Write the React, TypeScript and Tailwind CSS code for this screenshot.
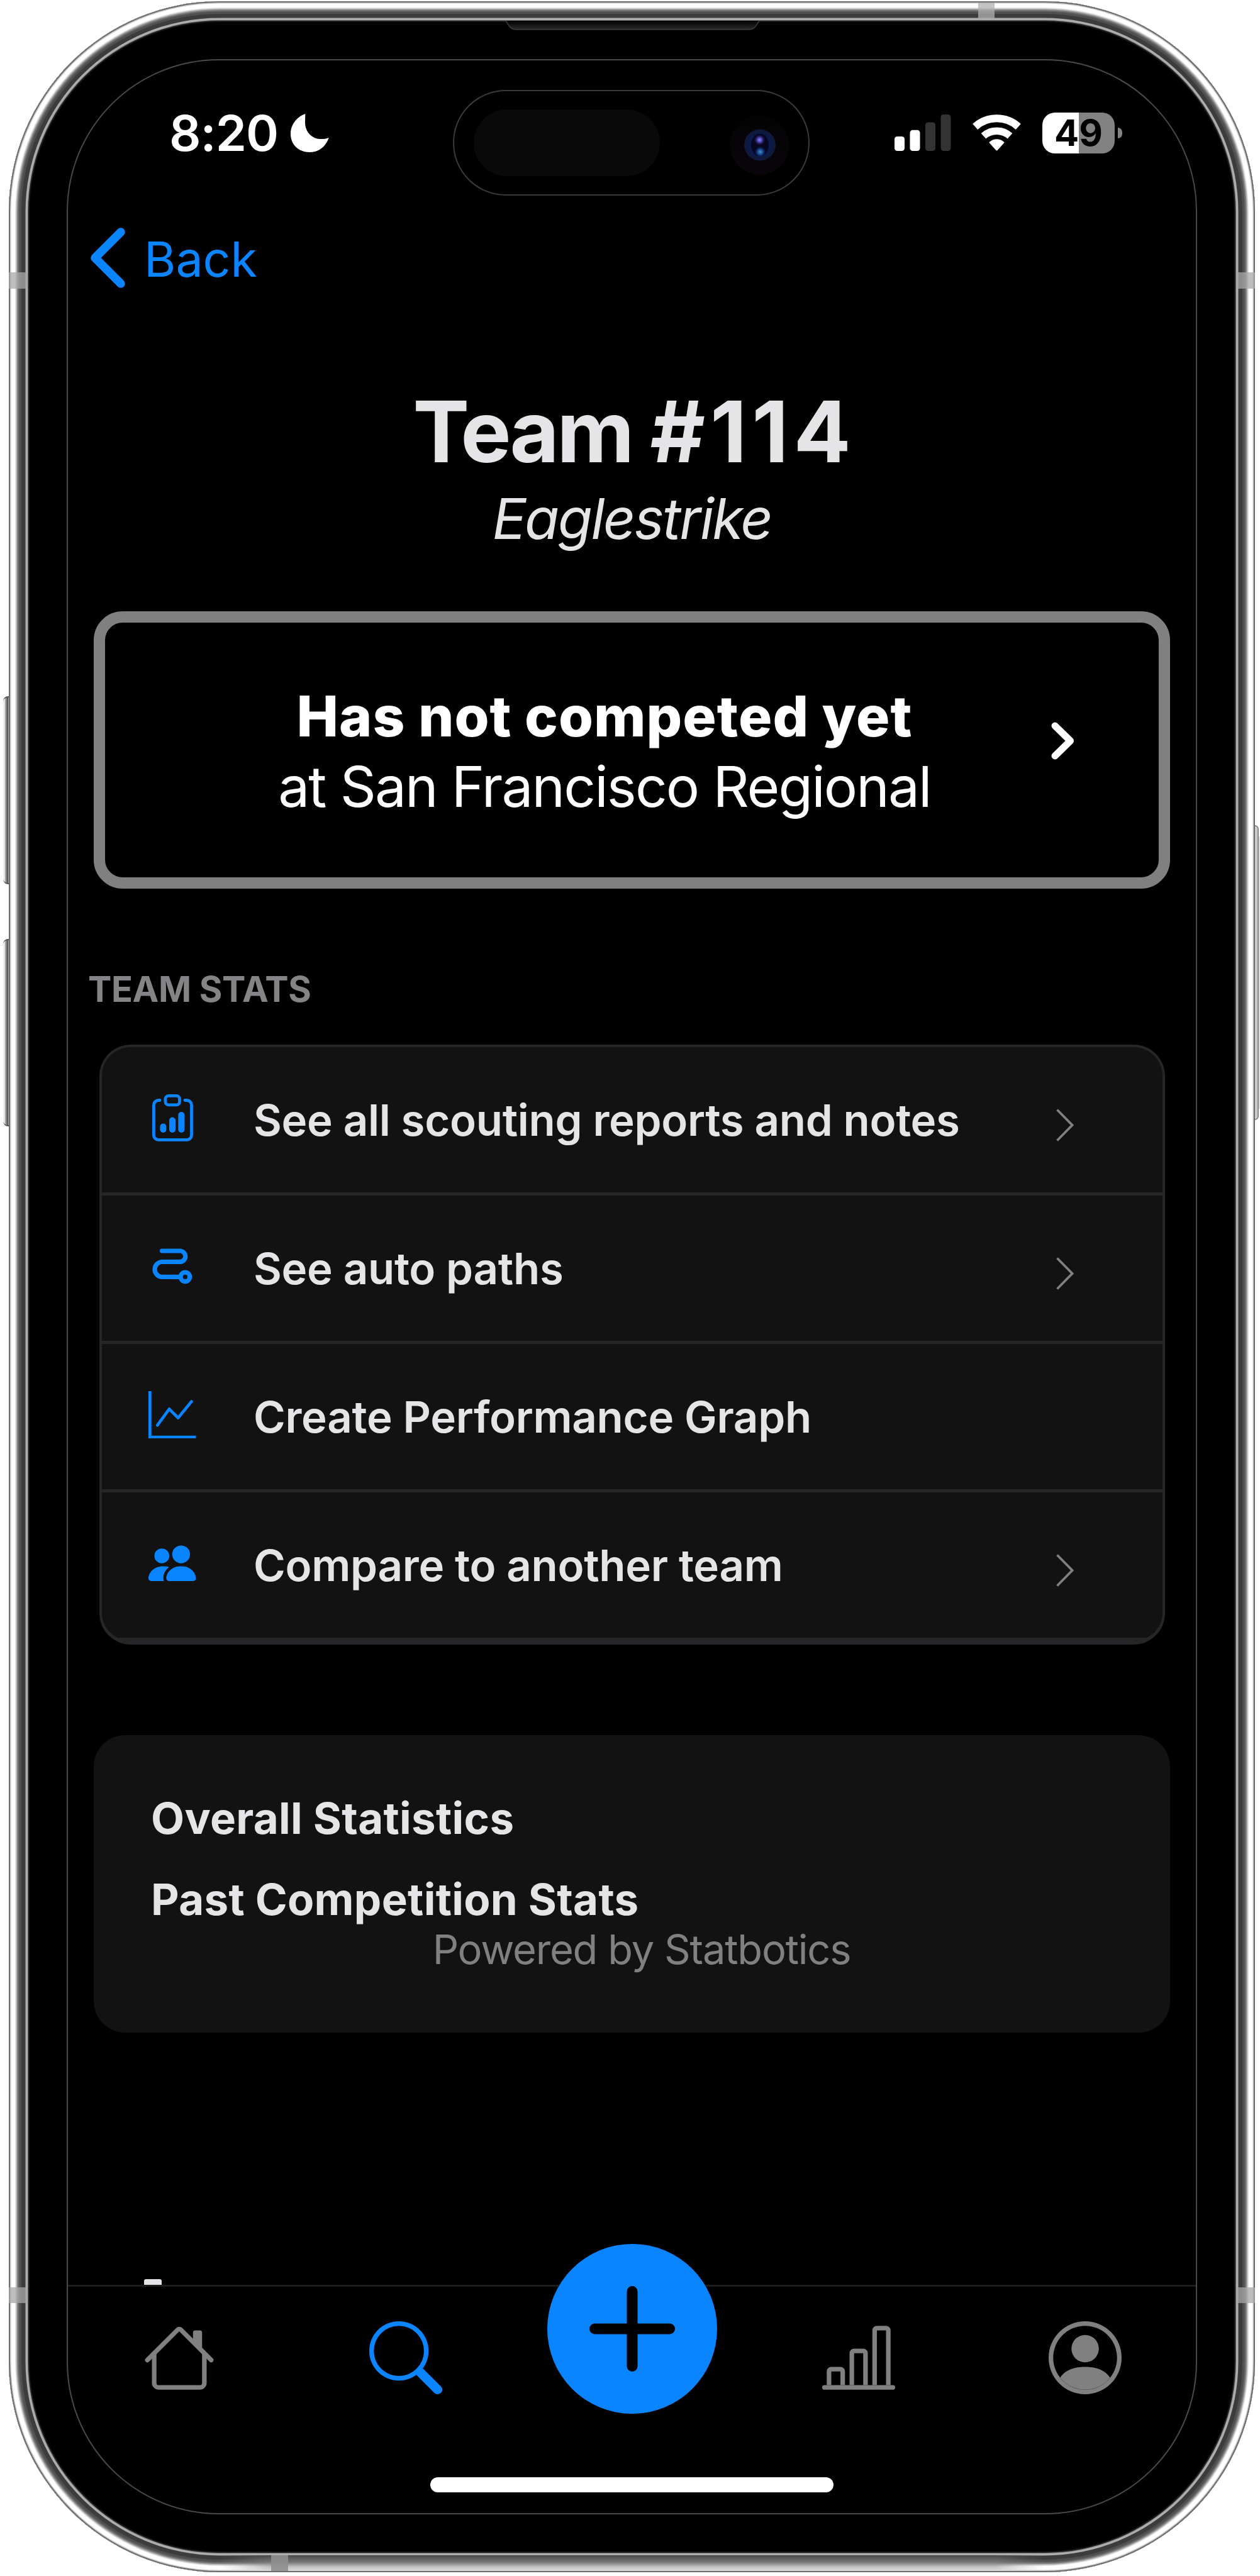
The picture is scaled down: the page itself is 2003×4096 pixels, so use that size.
import React from "react";
import { BsGraphUp, BsPeopleFill } from "react-icons/bs";

function Moon() {
  return (
    <svg width="61" height="61" viewBox="0 0 61 61" fill="#fff">
      <path d="M23.3 0C9 5 0 18 0 32c0 17 13 29 30 29 15 0 26-9 30.7-23C56 40 50 40.3 46 40 33 39 23 28 23 14 23 9 23.3 4 23.3 0Z" />
    </svg>
  );
}

function Signal() {
  return (
    <svg width="90" height="58" viewBox="0 0 90 58">
      <rect x="0" y="35" width="16" height="23" rx="4.5" fill="#fff" />
      <rect x="24.5" y="24.7" width="16" height="33.3" rx="4.5" fill="#fff" />
      <rect x="49" y="12.5" width="16" height="45.5" rx="4.5" fill="#333" />
      <rect x="73.5" y="0" width="16" height="58" rx="4.5" fill="#333" />
    </svg>
  );
}

function Wifi() {
  return (
    <svg width="77" height="58" viewBox="0 0 77 58" fill="none" stroke="#fff">
      <path d="M4.2 19.5A51.3 51.3 0 0 1 72.8 19.5" strokeWidth="12" />
      <path d="M17.5 34.2A31.5 31.5 0 0 1 59.5 34.2" strokeWidth="11.5" />
      <path d="M38.5 56L28.2 44.6A15.6 15.6 0 0 1 48.8 44.6Z" fill="#fff" strokeWidth="3" strokeLinejoin="round" />
    </svg>
  );
}

function Battery() {
  return (
    <div className="flex items-center">
      <div className="flex h-[65px] w-[115px] items-center justify-center rounded-[20px] bg-[linear-gradient(to_right,#fff_50%,#828282_50%)] text-[58px] leading-none font-bold text-black">
        49
      </div>
      <div className="ml-[5px] h-[17px] w-[7px] rounded-r-full bg-[#828282]" />
    </div>
  );
}

function StatusBar() {
  return (
    <div className="flex h-[230px] shrink-0 items-center pr-[117px] pl-[161px]">
      <span className="w-[193px] text-[79px] leading-none font-semibold tracking-[-1px] text-white">8:20</span>
      <Moon />
      <div className="ml-auto flex items-center gap-[34px]">
        <Signal />
        <Wifi />
        <Battery />
      </div>
    </div>
  );
}

function Island() {
  return (
    <div className="absolute top-[141px] left-[706px] flex h-[168px] w-[567px] items-center justify-between rounded-full border-2 border-[#3a3a3a] bg-black pr-[30px] pl-[31px]">
      <div className="h-[106px] w-[296px] rounded-full bg-[#090909]" />
      <svg width="95" height="95" viewBox="0 0 95 95" className="mt-[6px]">
        <defs>
          <linearGradient id="housing" x1="0" y1="0" x2="0" y2="1">
            <stop offset="0" stopColor="#030303" />
            <stop offset="1" stopColor="#0a050c" />
          </linearGradient>
          <radialGradient id="glintA">
            <stop offset="0" stopColor="#8a86ff" />
            <stop offset="0.45" stopColor="#4340a8" />
            <stop offset="1" stopColor="#150d35" stopOpacity="0" />
          </radialGradient>
          <radialGradient id="glintB">
            <stop offset="0" stopColor="#4a8cc0" />
            <stop offset="0.5" stopColor="#123f8a" />
            <stop offset="1" stopColor="#0a0d35" stopOpacity="0" />
          </radialGradient>
        </defs>
        <circle cx="47.5" cy="47.5" r="47" fill="url(#housing)" />
        <circle cx="48" cy="47.5" r="25" fill="#10193c" />
        <circle cx="48" cy="47.5" r="19" fill="#0a1a50" />
        <ellipse cx="48" cy="47.5" rx="14" ry="18" fill="#08061f" />
        <circle cx="47.5" cy="39.5" r="9" fill="url(#glintA)" />
        <circle cx="48.5" cy="58.5" r="9.5" fill="url(#glintB)" />
      </svg>
    </div>
  );
}

function Speaker() {
  return (
    <svg width="405" height="15" viewBox="0 0 405 15" className="absolute top-[31px] left-[789px]">
      <defs>
        <linearGradient id="mesh" x1="0" y1="0" x2="0" y2="1">
          <stop offset="0" stopColor="#000" />
          <stop offset="1" stopColor="#2c2c2c" />
        </linearGradient>
      </defs>
      <path d="M1 0C4 4 7 14 17 14H388C398 14 401 4 404 0" fill="url(#mesh)" stroke="#3c3c3c" strokeWidth="1.5" />
    </svg>
  );
}

function Chevron({ bold = false }: { bold?: boolean }) {
  return bold ? (
    <svg width="37" height="60" viewBox="0 0 37 60" fill="none" stroke="#fff" strokeWidth="11" strokeLinecap="round" strokeLinejoin="round">
      <path d="M6 6L30.5 30L6 54" />
    </svg>
  ) : (
    <svg width="28" height="52" viewBox="0 0 28 52" fill="none" stroke="#808080" strokeWidth="3.8">
      <path d="M1.5 1.5L25.5 26L1.5 50.5" />
    </svg>
  );
}

function ClipboardIcon() {
  return (
    <svg width="65" height="75" viewBox="0 0 65 75" fill="none" stroke="#0a84ff" strokeWidth="4.8" strokeLinecap="round">
      <rect x="20.9" y="2.4" width="22.6" height="14.4" rx="5" />
      <path d="M12 9.5H10A7.6 7.6 0 0 0 2.4 17V65A7.4 7.4 0 0 0 10 72.3H55A7.4 7.4 0 0 0 62.5 65V17A7.6 7.6 0 0 0 55 9.5H52" />
      <g stroke="none" fill="#0a84ff">
        <rect x="12.4" y="46.5" width="10" height="14.5" rx="5" />
        <rect x="27" y="36.5" width="10" height="24.5" rx="5" />
        <rect x="41.3" y="28" width="10" height="33" rx="5" />
      </g>
    </svg>
  );
}

function PathIcon() {
  return (
    <svg width="64" height="57" viewBox="0 0 64 57" fill="none" stroke="#0a84ff" strokeWidth="7.2" strokeLinecap="round">
      <path d="M15.5 4H44A8.6 8.6 0 0 1 44 21.4H16A12 12 0 0 0 16 45.4H43" />
      <circle cx="52.4" cy="45.4" r="7.3" />
    </svg>
  );
}

const rows = [
  { label: "See all scouting reports and notes", icon: <ClipboardIcon />, arrow: true },
  { label: "See auto paths", icon: <PathIcon />, arrow: true },
  { label: "Create Performance Graph", icon: <BsGraphUp size={75.5} color="#0a84ff" />, arrow: false },
  { label: "Compare to another team", icon: <BsPeopleFill size={75.5} color="#0a84ff" />, arrow: true },
];

function TabIcon({ color, children }: { color: string; children: React.ReactNode }) {
  return (
    <svg width="116" height="116" viewBox="0 0 16 16" fill={color} fillRule="evenodd" className="justify-self-center">
      {children}
    </svg>
  );
}

function TabBar() {
  return (
    <nav className="flex h-[363px] shrink-0 flex-col items-center border-t-[3px] border-[#1c1c1c] pt-[55px]">
      <div className="grid h-[116px] w-[1800px] shrink-0 grid-cols-5 items-start">
        <TabIcon color="#808080">
          <path d="M2 13.5V7h1v6.5a.5.5 0 0 0 .5.5h9a.5.5 0 0 0 .5-.5V7h1v6.5a1.5 1.5 0 0 1-1.5 1.5h-9A1.5 1.5 0 0 1 2 13.5zm11-11V6l-2-2V2.5a.5.5 0 0 1 .5-.5h1a.5.5 0 0 1 .5.5z" />
          <path d="M7.293 1.5a1 1 0 0 1 1.414 0l6.647 6.646a.5.5 0 0 1-.708.708L8 2.207 1.354 8.854a.5.5 0 1 1-.708-.708L7.293 1.5z" />
        </TabIcon>
        <TabIcon color="#0a84ff">
          <path d="M10.442 10.442a1 1 0 0 1 1.415 0l3.85 3.85a1 1 0 0 1-1.414 1.415l-3.85-3.85a1 1 0 0 1 0-1.415z" />
          <path d="M6.5 12a5.5 5.5 0 1 0 0-11 5.5 5.5 0 0 0 0 11zM13 6.5a6.5 6.5 0 1 1-13 0 6.5 6.5 0 0 1 13 0z" />
        </TabIcon>
        <div className="-mt-[123px] flex h-[270px] w-[270px] items-center justify-center justify-self-center rounded-full bg-[#0a84ff]">
          <svg width="136" height="136" viewBox="0 0 136 136" stroke="#000" strokeWidth="17" strokeLinecap="round">
            <path d="M68 8.5V127.5M8.5 68H127.5" />
          </svg>
        </div>
        <TabIcon color="#808080">
          <path d="M4 11H2v3h2v-3zm5-4H7v7h2V7zm5-5v12h-2V2h2zm-2-1a1 1 0 0 0-1 1v12h4V2a1 1 0 0 0-1-1h-2zM6 7a1 1 0 0 1 1-1h2a1 1 0 0 1 1 1v7H6V7zm-5 4a1 1 0 0 1 1-1h2a1 1 0 0 1 1 1v3H1v-3z" />
          <rect x="0" y="14" width="16" height="1" rx="0.5" />
        </TabIcon>
        <TabIcon color="#808080">
          <path d="M13.468 12.37C12.758 11.226 11.195 10 8 10s-4.757 1.225-5.468 2.37A6.987 6.987 0 0 0 8 15a6.987 6.987 0 0 0 5.468-2.63z" />
          <path d="M8 9a3 3 0 1 0 0-6 3 3 0 0 0 0 6z" />
          <path d="M8 1a7 7 0 1 0 0 14A7 7 0 0 0 8 1zM0 8a8 8 0 1 1 16 0A8 8 0 0 1 0 8z" />
        </TabIcon>
      </div>
      <div className="mt-[132px] h-[24px] w-[641px] rounded-full bg-white" />
    </nav>
  );
}

function Screen() {
  return (
    <div className="flex h-[3904px] w-[1797px] flex-col overflow-hidden rounded-[242px] border-2 border-[#4a4a4a] bg-black">
      <StatusBar />
      <div className="flex h-[172px] shrink-0 items-center pl-[35px] text-[#0a84ff]">
        <svg width="56" height="96" viewBox="0 0 56 96" fill="none" stroke="#0a84ff" strokeWidth="13.5" strokeLinecap="round" strokeLinejoin="round" className="-mt-[4px]">
          <path d="M49 7L8 48L49 89" />
        </svg>
        <span className="ml-[30px] text-[77px] leading-none">Back</span>
      </div>
      <h1 className="mt-[113px] text-center text-[135px] leading-[150px] font-bold text-[#e5e5e7]">
        <span className="tracking-[-3.5px]">Team </span>
        <span className="tracking-[8px]">#11</span>4
      </h1>
      <p className="text-center text-[90px] leading-[128px] tracking-[-2.5px] text-[#e5e5e7] italic">Eaglestrike</p>

      <div className="mt-[83px] ml-[41px] flex h-[441px] w-[1711px] shrink-0 items-start rounded-[46px] border-[18.5px] border-[#808080] pt-[93px] text-white">
        <div className="ml-[104px] w-[1380px] text-center text-[89px] leading-[112px] whitespace-nowrap">
          <div className="font-extrabold tracking-[1px]">Has not competed yet</div>
          <div className="tracking-[-1.9px]">at San Francisco Regional</div>
        </div>
        <div className="mt-[65px] ml-[20px]">
          <Chevron bold />
        </div>
      </div>

      <h2 className="mt-[120px] ml-[32px] text-[56px] leading-[80px] font-bold tracking-[-0.4px] text-[#848487]">TEAM STATS</h2>
      <ul className="mt-[48px] ml-[50px] w-[1694px] shrink-0 overflow-hidden rounded-[50px] border-4 border-b-[6px] border-[#262628] bg-[#121212]">
        {rows.map((row) => (
          <li key={row.label} className="flex h-[236px] items-center border-b-[5px] border-[#262628] pr-[141px] pl-[74px]">
            <span className="-mt-[6px] flex w-[76px] justify-center">{row.icon}</span>
            <span className="ml-[91px] text-[69px] leading-[80px] font-semibold tracking-[-0.3px] whitespace-nowrap text-[#e5e5e7]">{row.label}</span>
            {row.arrow && (
              <span className="mt-[17px] ml-auto">
                <Chevron />
              </span>
            )}
          </li>
        ))}
      </ul>

      <div className="mt-[144px] ml-[41px] h-[473px] w-[1711px] shrink-0 rounded-[50px] bg-[#121212] pt-[87px] pl-[91px] text-[69px] leading-[80px] font-bold tracking-[0.3px] text-[#e5e5e7]">
        <div className="leading-[90px]">Overall Statistics</div>
        <div className="mt-[44px]">Past Competition Stats</div>
        <div className="-ml-[60px] text-center text-[65px] font-normal tracking-[-1.2px] text-[#808080]">Powered by Statbotics</div>
      </div>

      <div className="mt-auto ml-[121px] h-[9px] w-[28px] shrink-0 rounded-t-[3px] bg-[#e5e5e7]" />
      <TabBar />
    </div>
  );
}

export default function App() {
  return (
    <div className="relative h-[4096px] w-[2003px] overflow-hidden bg-white pt-[2px] pl-[14px] font-[Inter,sans-serif]">
      <div className="absolute top-[1107px] left-[5px] h-[299px] w-[10px] rounded-l-[8px] border-y-[2px] border-[#555] bg-[linear-gradient(to_right,#f0f0f0_20%,#9a9a9a_40%,#505050_75%,#dcdcdc_90%)]" />
      <div className="absolute top-[1493px] left-[5px] h-[298px] w-[10px] rounded-l-[8px] border-y-[2px] border-[#555] bg-[linear-gradient(to_right,#f0f0f0_20%,#9a9a9a_40%,#505050_75%,#dcdcdc_90%)]" />
      <div className="absolute top-[1312px] left-[1992px] h-[469px] w-[9px] rounded-r-[6px] border-2 border-[#888] bg-[#cdcdcd]" />
      <div className="absolute top-[1330px] left-[2001px] h-[433px] w-[2px] bg-[#dedede]" />

      <div className="relative h-[4088px] w-[1981px] rounded-[335px] bg-black p-[92px] shadow-[inset_0_0_0_2px_#6c6c6c,inset_0_0_0_3.5px_#c8c8c8,inset_0_0_0_10px_#ffffff,inset_0_0_0_11.5px_#e6e6e6,inset_0_0_0_13px_#b4b4b4,inset_0_0_0_14.5px_#8a8a8a,inset_0_0_0_16.5px_#686868,inset_0_0_0_20px_#505050,inset_0_0_0_26.5px_#3c3c3c,inset_0_0_0_30px_#adadad,inset_0_0_0_31px_#666666,inset_0_0_0_33px_#1a1a1a]">
        <div className="absolute bottom-[2px] left-[335px] h-[25px] w-[1311px] bg-[linear-gradient(to_bottom,#484848,#7a7a7a_45%,#c4c4c4_75%,#dadada)] [mask-image:linear-gradient(to_right,transparent,#000_6%,#000_94%,transparent)]" />
        <div className="absolute top-[2px] left-[1541px] h-[25px] w-[26px] bg-[#b0b0b0]/75" />
        <div className="absolute bottom-[2px] left-[417px] h-[25px] w-[27px] bg-[#8f8f8f]/90" />
        <div className="absolute top-[431px] left-0 h-[26px] w-[30px] bg-[#a8a8a8]/75" />
        <div className="absolute top-[431px] right-0 h-[26px] w-[30px] bg-[#a8a8a8]/75" />
        <div className="absolute top-[3635px] left-0 h-[25px] w-[30px] bg-[#a8a8a8]/75" />
        <div className="absolute top-[3635px] right-0 h-[25px] w-[30px] bg-[#a8a8a8]/75" />
        <Speaker />
        <Screen />
        <Island />
      </div>
    </div>
  );
}
